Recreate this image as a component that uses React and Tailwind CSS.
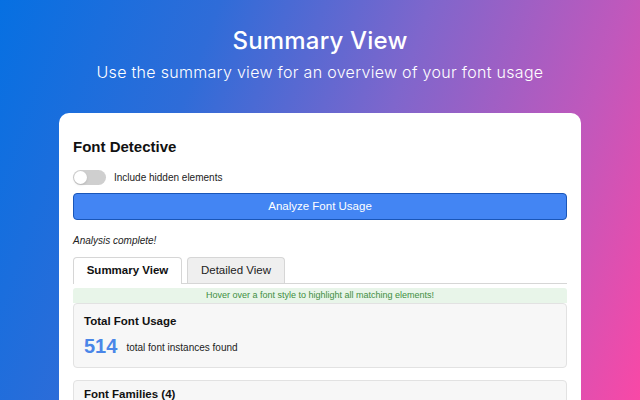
export default function App() {
  return (
    <div className="w-[640px] h-[400px] overflow-hidden flex flex-col items-center bg-[linear-gradient(110deg,#0670e2_0%,#2f6cd8_28%,#7f66cc_55%,#c058bc_80%,#f948a6_100%)] pt-[26px]">
      <h1 className="text-white text-[24px] leading-[30px] font-medium font-['Inter',sans-serif] tracking-[0.2px]">
        Summary View
      </h1>
      <p className="mt-[6px] text-white text-[16px] leading-[20px] font-light font-['Inter',sans-serif] tracking-[0.3px]">
        Use the summary view for an overview of your font usage
      </p>

      <div className="mt-[31px] w-[522px] flex-1 bg-white rounded-t-[10px] px-[14px] pt-[24px] font-['Liberation_Sans',Arial,sans-serif] text-[#222]">
        <h2 className="text-[15px] leading-[20px] font-bold text-[#111]">Font Detective</h2>

        <div className="mt-[12px] flex items-center h-[16px]">
          <div className="w-[33px] h-[15px] rounded-full bg-[#cfcfcf] flex items-center px-[1px]">
            <div className="w-[13px] h-[13px] rounded-full bg-white shadow-sm"></div>
          </div>
          <span className="ml-[8px] text-[10px] text-[#222]">Include hidden elements</span>
        </div>

        <button className="mt-[8px] w-full h-[27px] rounded-[4px] bg-[#4385f3] border-[1.5px] border-[#1a56b8] text-white text-[11.5px] leading-none">
          Analyze Font Usage
        </button>

        <p className="mt-[14px] text-[10px] leading-[14px] italic text-[#222]">Analysis complete!</p>

        <div className="mt-[9px] flex items-end gap-[5px] border-b border-[#d6d6d6]">
          <div className="h-[27px] w-[109px] flex items-center justify-center bg-white border border-b-0 border-[#d6d6d6] rounded-t-[4px] text-[11.5px] font-bold text-[#111] -mb-px">
            Summary View
          </div>
          <div className="h-[26px] w-[98px] flex items-center justify-center bg-[#efefef] border border-b-0 border-[#d6d6d6] rounded-t-[4px] text-[11.5px] text-[#222]">
            Detailed View
          </div>
        </div>

        <div className="mt-[4px] h-[15px] bg-[#e8f5e9] rounded-t-[3px] flex items-center justify-center text-[9px] text-[#3e8e41]">
          Hover over a font style to highlight all matching elements!
        </div>

        <div className="h-[65px] bg-[#f7f7f7] border border-[#e2e2e2] rounded-[4px] px-[10px] pt-[9px]">
          <h3 className="text-[11.5px] leading-[16px] font-bold text-[#111]">Total Font Usage</h3>
          <div className="mt-[4px] flex items-center">
            <span className="text-[20px] leading-[26px] font-bold text-[#4a86e8]">514</span>
            <span className="ml-[9px] mt-[3px] text-[10px] text-[#222]">total font instances found</span>
          </div>
        </div>

        <div className="mt-[12px] h-[60px] bg-[#f7f7f7] border border-[#e2e2e2] rounded-[4px] px-[10px] pt-[5px]">
          <h3 className="text-[11.5px] leading-[16px] font-bold text-[#111]">Font Families (4)</h3>
        </div>
      </div>
    </div>
  );
}
